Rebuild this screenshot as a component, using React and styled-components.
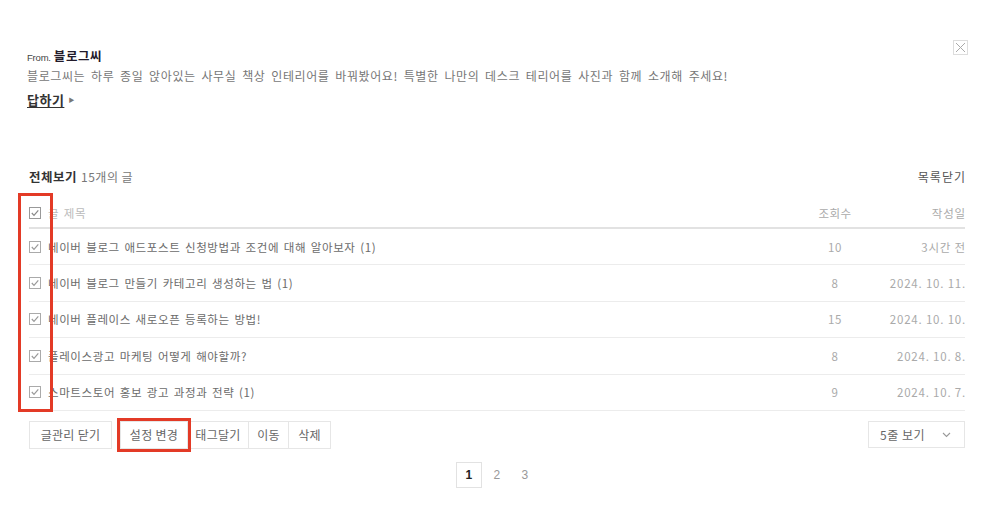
import React from "react";
import styled, { createGlobalStyle } from "styled-components";

const GlobalStyle = createGlobalStyle`
  html, body { margin: 0; padding: 0; background: #fff; }
  body { font-family: "Noto Sans CJK KR", "Noto Sans", sans-serif; color: #333; }
  * { box-sizing: border-box; }
`;

const Page = styled.div`
  position: relative;
  width: 1008px;
  height: 528px;
  padding: 40px 43px 0 27px;
  background: #fff;
  overflow: hidden;
  letter-spacing: 0.5px;
`;

const Top = styled.div`
  display: flex;
  justify-content: space-between;
  align-items: flex-start;
`;

const Message = styled.div`
  display: flex;
  flex-direction: column;
  padding-top: 8px;
`;

const FromLine = styled.div`
  display: flex;
  align-items: baseline;
  gap: 3px;
  height: 16px;
  line-height: 16px;
`;

const FromLabel = styled.span`
  font-family: "Liberation Sans", Arial, sans-serif;
  font-size: 9.5px;
  color: #444;
  letter-spacing: -0.2px;
`;

const FromName = styled.span`
  font-size: 12.5px;
  font-weight: 700;
  color: #221a2a;
  letter-spacing: 0.6px;
`;

const Desc = styled.p`
  margin: 4px 0 0;
  font-size: 12px;
  line-height: 16px;
  color: #777;
  letter-spacing: 0.6px;
  word-spacing: 2.5px;
  white-space: nowrap;
`;

const Reply = styled.a`
  margin-top: 8px;
  display: inline-flex;
  align-items: center;
  gap: 4px;
  font-size: 13px;
  line-height: 16px;
  font-weight: 700;
  color: #333;
  text-decoration: none;
  span {
    text-decoration: underline;
    text-underline-offset: 2px;
  }
`;

const Tri = styled.i`
  font-style: normal;
  font-size: 6px;
  color: #777;
`;

const Close = styled.button`
  width: 15px;
  height: 15px;
  padding: 0;
  margin-right: -3px;
  border: 1px solid #ddd;
  background: #fff;
  display: flex;
  align-items: center;
  justify-content: center;
`;

const ListHead = styled.div`
  margin-top: 57px;
  display: flex;
  justify-content: space-between;
  align-items: center;
  padding-left: 2px;
  height: 18px;
  font-size: 12px;
`;

const Strong = styled.b`
  font-weight: 700;
  font-size: 12.5px;
  color: #333;
`;

const Count = styled.span`
  color: #777;
  margin-left: 4px;
`;

const CloseList = styled.a`
  color: #555;
  font-size: 12px;
  letter-spacing: 1px;
  margin-right: -1px;
`;

const Table = styled.div`
  margin-top: 14px;
  margin-left: 2px;
`;

const Row = styled.div`
  display: grid;
  grid-template-columns: 12px 1fr 60px 94px;
  column-gap: 6px;
  align-items: center;
  height: ${(p) => (p.$head ? "30px" : "36.4px")};
  border-bottom: ${(p) => (p.$head ? "2px solid #e2e2e2" : "1px solid #ececec")};
  font-size: 11.5px;
  color: ${(p) => (p.$head ? "#bbb" : "#6b6b6b")};
`;

const Title = styled.span`
  white-space: nowrap;
  overflow: hidden;
  padding-left: 1px;
  letter-spacing: 0.6px;
  word-spacing: 1.5px;
`;

const Views = styled.span`
  text-align: center;
  color: #aaa;
`;

const DateCell = styled.span`
  text-align: right;
  color: #aaa;
  letter-spacing: 0.8px;
  margin-right: -1px;
`;

const Bottom = styled.div`
  margin-top: 10px;
  margin-left: 2px;
  display: flex;
  justify-content: space-between;
  align-items: center;
`;

const Actions = styled.div`
  display: flex;
  gap: 8px;
`;

const Group = styled.div`
  display: flex;
`;

const Btn = styled.button`
  position: relative;
  height: 28px;
  width: ${(p) => p.$w}px;
  padding: 0;
  border: 1px solid #e6e6e6;
  margin-left: ${(p) => (p.$joined ? "-1px" : "0")};
  background: #fff;
  font-family: inherit;
  font-size: 12px;
  letter-spacing: 0.3px;
  color: #666;
  z-index: ${(p) => (p.$mark ? 1 : 0)};
  outline: ${(p) => (p.$mark ? "3px solid #e33a26" : "none")};
  outline-offset: 0;
`;

const Select = styled.div`
  width: 97px;
  height: 27px;
  border: 1px solid #e6e6e6;
  display: flex;
  align-items: center;
  justify-content: space-between;
  padding: 0 13px 0 11px;
  font-size: 12px;
  color: #666;
`;

const Pager = styled.div`
  margin-top: 13px;
  display: flex;
  justify-content: center;
  gap: 2px;
  padding-left: 2px;
`;

const PageNum = styled.a`
  width: 26px;
  height: 26px;
  display: flex;
  align-items: center;
  justify-content: center;
  border: 1px solid ${(p) => (p.$on ? "#e2e2e2" : "transparent")};
  font-family: "Liberation Sans", Arial, sans-serif;
  font-size: 12px;
  font-weight: ${(p) => (p.$on ? 700 : 400)};
  color: ${(p) => (p.$on ? "#222" : "#999")};
`;

const Marker = styled.div`
  position: absolute;
  left: 18px;
  top: 193px;
  width: 35px;
  height: 219px;
  border: 3px solid #e33a26;
  pointer-events: none;
`;

const Check = ({ dark }) => (
  <svg width="12" height="12" viewBox="0 0 12 12">
    <rect x="0.5" y="0.5" width="11" height="11" fill="#fff" stroke={dark ? "#999" : "#aaa"} />
    <polyline points="2.8,6 5,8.3 9.3,3.4" fill="none" stroke={dark ? "#888" : "#999"} strokeWidth="1.2" />
  </svg>
);

const rows = [
  ["네이버 블로그 애드포스트 신청방법과 조건에 대해 알아보자 (1)", "10", "3시간 전"],
  ["네이버 블로그 만들기 카테고리 생성하는 법 (1)", "8", "2024. 10. 11."],
  ["네이버 플레이스 새로오픈 등록하는 방법!", "15", "2024. 10. 10."],
  ["플레이스광고 마케팅 어떻게 해야할까?", "8", "2024. 10. 8."],
  ["스마트스토어 홍보 광고 과정과 전략 (1)", "9", "2024. 10. 7."],
];

export default function App() {
  return (
    <>
      <GlobalStyle />
      <Page>
        <Top>
          <Message>
            <FromLine>
              <FromLabel>From.</FromLabel>
              <FromName>블로그씨</FromName>
            </FromLine>
            <Desc>
              블로그씨는 하루 종일 앉아있는 사무실 책상 인테리어를 바꿔봤어요! 특별한 나만의 데스크 테리어를 사진과 함께 소개해 주세요!
            </Desc>
            <div>
              <Reply>
                <span>답하기</span>
                <Tri>▶</Tri>
              </Reply>
            </div>
          </Message>
          <Close aria-label="닫기">
            <svg width="11" height="11" viewBox="0 0 11 11">
              <path d="M1 1L10 10M10 1L1 10" stroke="#aaa" strokeWidth="1" />
            </svg>
          </Close>
        </Top>

        <ListHead>
          <div>
            <Strong>전체보기</Strong>
            <Count>15개의 글</Count>
          </div>
          <CloseList>목록닫기</CloseList>
        </ListHead>

        <Table>
          <Row $head>
            <Check dark />
            <Title>글 제목</Title>
            <Views>조회수</Views>
            <DateCell>작성일</DateCell>
          </Row>
          {rows.map(([t, v, d]) => (
            <Row key={t}>
              <Check />
              <Title>{t}</Title>
              <Views>{v}</Views>
              <DateCell>{d}</DateCell>
            </Row>
          ))}
        </Table>

        <Bottom>
          <Actions>
            <Btn $w={83}>글관리 닫기</Btn>
            <Group>
              <Btn $w={68} $mark>설정 변경</Btn>
              <Btn $w={62} $joined>태그달기</Btn>
              <Btn $w={41} $joined>이동</Btn>
              <Btn $w={43} $joined>삭제</Btn>
            </Group>
          </Actions>
          <Select>
            <span>5줄 보기</span>
            <svg width="9" height="6" viewBox="0 0 9 6">
              <polyline points="1,1 4.5,4.5 8,1" fill="none" stroke="#999" strokeWidth="1.1" />
            </svg>
          </Select>
        </Bottom>

        <Pager>
          <PageNum $on>1</PageNum>
          <PageNum>2</PageNum>
          <PageNum>3</PageNum>
        </Pager>

        <Marker />
      </Page>
    </>
  );
}
